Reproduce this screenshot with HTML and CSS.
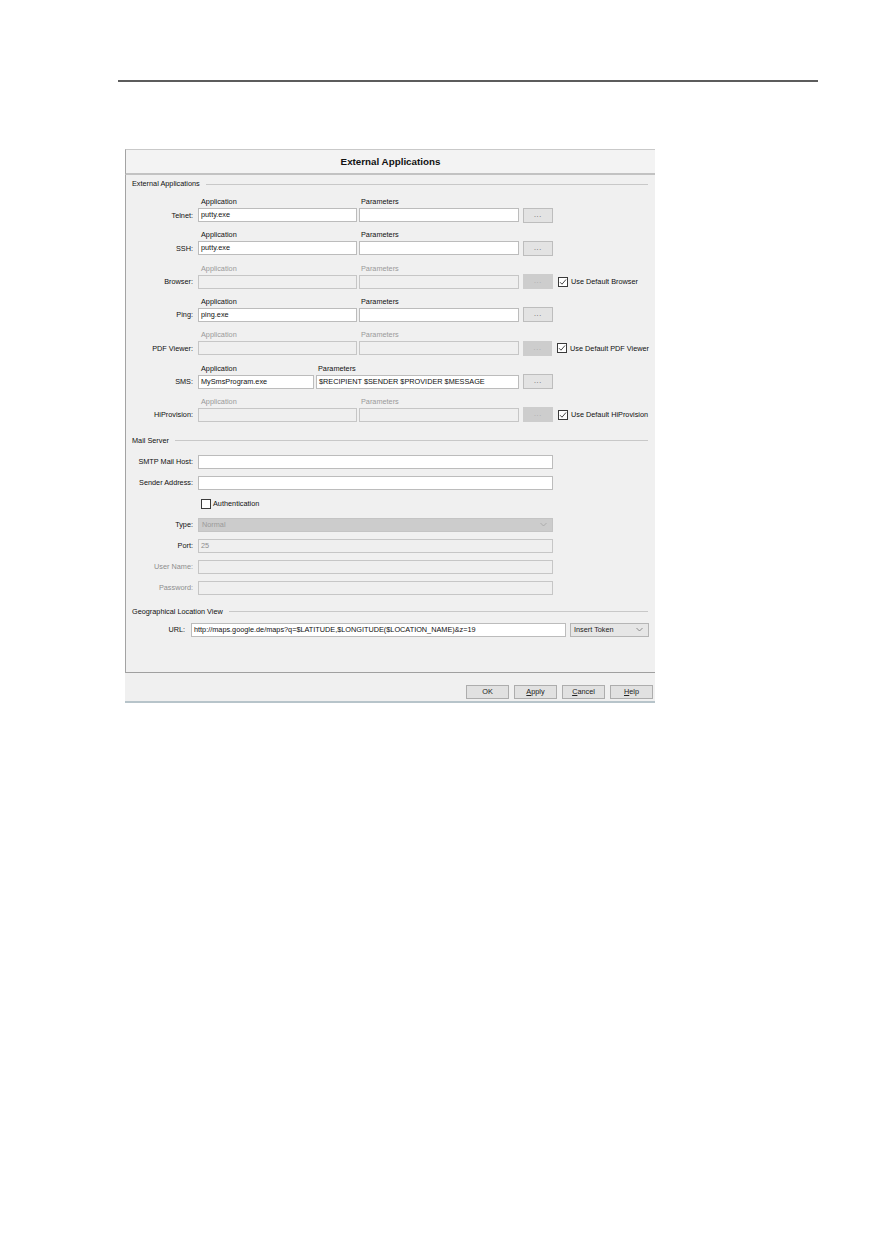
FILE: index.html
```html
<!DOCTYPE html>
<html lang="en">
<head>
    <meta charset="UTF-8">
    <meta name="viewport" content="width=device-width, initial-scale=1.0">
    <title>External Applications</title>
    <link rel="stylesheet" href="styles.css">
</head>
<body>
    <div class="page">
        <div class="rule"></div>

        <div id="dialog">
            <div class="titlebar">External Applications</div>

            <div class="content">
                <!-- external applications -->
                <div class="group-title"><span>External Applications</span></div>
                <div class="apps">
                    <div class="app">
                        <div class="heads"><span class="h-app">Application</span><span class="h-par">Parameters</span></div>
                        <div class="line">
                            <span class="lbl">Telnet:</span>
                            <div class="field f-app">putty.exe</div>
                            <div class="field f-par"></div>
                            <div class="dots">...</div>
                        </div>
                    </div>
                    <div class="app">
                        <div class="heads"><span class="h-app">Application</span><span class="h-par">Parameters</span></div>
                        <div class="line">
                            <span class="lbl">SSH:</span>
                            <div class="field f-app">putty.exe</div>
                            <div class="field f-par"></div>
                            <div class="dots">...</div>
                        </div>
                    </div>
                    <div class="app off">
                        <div class="heads"><span class="h-app">Application</span><span class="h-par">Parameters</span></div>
                        <div class="line">
                            <span class="lbl">Browser:</span>
                            <div class="field f-app"></div>
                            <div class="field f-par"></div>
                            <div class="dots">...</div>
                            <span class="check on"><i></i>Use Default Browser</span>
                        </div>
                    </div>
                    <div class="app">
                        <div class="heads"><span class="h-app">Application</span><span class="h-par">Parameters</span></div>
                        <div class="line">
                            <span class="lbl">Ping:</span>
                            <div class="field f-app">ping.exe</div>
                            <div class="field f-par"></div>
                            <div class="dots">...</div>
                        </div>
                    </div>
                    <div class="app off">
                        <div class="heads"><span class="h-app">Application</span><span class="h-par">Parameters</span></div>
                        <div class="line">
                            <span class="lbl">PDF Viewer:</span>
                            <div class="field f-app"></div>
                            <div class="field f-par"></div>
                            <div class="dots">...</div>
                            <span class="check on"><i></i>Use Default PDF Viewer</span>
                        </div>
                    </div>
                    <div class="app sms">
                        <div class="heads"><span class="h-app">Application</span><span class="h-par">Parameters</span></div>
                        <div class="line">
                            <span class="lbl">SMS:</span>
                            <div class="field f-app">MySmsProgram.exe</div>
                            <div class="field f-par">$RECIPIENT $SENDER $PROVIDER $MESSAGE</div>
                            <div class="dots">...</div>
                        </div>
                    </div>
                    <div class="app off">
                        <div class="heads"><span class="h-app">Application</span><span class="h-par">Parameters</span></div>
                        <div class="line">
                            <span class="lbl">HiProvision:</span>
                            <div class="field f-app"></div>
                            <div class="field f-par"></div>
                            <div class="dots">...</div>
                            <span class="check on"><i></i>Use Default HiProvision</span>
                        </div>
                    </div>
                </div>

                <!-- mail server -->
                <div class="group-title mail-title"><span>Mail Server</span></div>
                <div class="mail">
                    <div class="line">
                        <span class="lbl">SMTP Mail Host:</span>
                        <div class="field f-wide"></div>
                    </div>
                    <div class="line">
                        <span class="lbl">Sender Address:</span>
                        <div class="field f-wide"></div>
                    </div>
                    <div class="line">
                        <span class="lbl"></span>
                        <span class="check auth"><i></i>Authentication</span>
                    </div>
                    <div class="line">
                        <span class="lbl">Type:</span>
                        <div class="combo disabled">Normal
                            <svg width="7" height="5" viewBox="0 0 7 5"><path d="M0.5 1 L3.5 4 L6.5 1" fill="none" stroke="#a5a5a5" stroke-width="0.8"/></svg>
                        </div>
                    </div>
                    <div class="line">
                        <span class="lbl">Port:</span>
                        <div class="field f-wide disabled">25</div>
                    </div>
                    <div class="line">
                        <span class="lbl grey">User Name:</span>
                        <div class="field f-wide disabled"></div>
                    </div>
                    <div class="line">
                        <span class="lbl grey">Password:</span>
                        <div class="field f-wide disabled"></div>
                    </div>
                </div>

                <!-- geo location -->
                <div class="group-title geo-title"><span>Geographical Location View</span></div>
                <div class="line url-line">
                    <span class="lbl">URL:</span>
                    <div class="field f-url">http://maps.google.de/maps?q=$LATITUDE,$LONGITUDE($LOCATION_NAME)&amp;z=19</div>
                    <div class="combo token">Insert Token
                        <svg width="7" height="5" viewBox="0 0 7 5"><path d="M0.5 1 L3.5 4 L6.5 1" fill="none" stroke="#777" stroke-width="0.8"/></svg>
                    </div>
                </div>
            </div>

            <div class="buttonbar">
                <button>OK</button>
                <button><u>A</u>pply</button>
                <button><u>C</u>ancel</button>
                <button><u>H</u>elp</button>
            </div>
        </div>
    </div>
</body>
</html>
```

FILE: styles.css
```css
body {
    margin: 0;
    padding: 0;
    background-color: #fff;
    font-family: "Liberation Sans", Arial, sans-serif;
}
.page {
    padding-top: 80px;
}
.rule {
    margin-left: 118px;
    width: 700px;
    height: 2px;
    background-color: #5c5c5c;
}

#dialog {
    margin-top: 67px;
    margin-left: 125px;
    width: 530px;
    font-size: 7.3px;
    color: #111;
}
.titlebar {
    height: 23px;
    line-height: 24px;
    border-top: 1px solid #c9c9c9;
    border-bottom: 2px solid #c2c2c2;
    border-left: 1px solid #a3a3a3;
    background-color: #f3f3f3;
    text-align: center;
    font-size: 9.8px;
    font-weight: bold;
    color: #111;
}
.content {
    border-left: 1px solid #a3a3a3;
    border-bottom: 1px solid #a0a0a0;
    background-color: #f0f0f0;
    padding: 4px 6px 35px 6px;
}

/* group headers with the line after them */
.group-title {
    display: flex;
    align-items: center;
    height: 10px;
    line-height: 10px;
    margin-right: 1px;
}
.group-title::after {
    content: "";
    flex: 1;
    height: 1px;
    margin-left: 6px;
    background-color: #c8c8c8;
}
.mail-title {
    margin-top: 14px;
}
.geo-title {
    margin-top: 12px;
}

.apps {
    margin-top: 7px;
    display: flex;
    flex-direction: column;
    gap: 7.33px;
}
.heads {
    display: flex;
    height: 12px;
    line-height: 12px;
    padding-left: 66px;
}
.h-app {
    width: 158px;
    padding-left: 3px;
}
.h-par {
    padding-left: 2px;
}
.line {
    display: flex;
    align-items: center;
    height: 14px;
}
.lbl {
    width: 61px;
    margin-right: 5px;
    text-align: right;
    flex-shrink: 0;
}
.lbl.grey {
    color: #8e8e8e;
}

.field {
    box-sizing: border-box;
    height: 14px;
    line-height: 12px;
    padding-left: 2px;
    border: 1px solid #bcbcbc;
    background-color: #fff;
    white-space: nowrap;
    overflow: hidden;
    flex-shrink: 0;
}
.field.disabled {
    background-color: #efefef;
    border-color: #c6c6c6;
    color: #8e8e8e;
}
.f-app {
    width: 159px;
    margin-right: 2px;
}
.f-par {
    width: 160px;
    margin-right: 4px;
}
.sms .h-app {
    width: 115px;
}
.sms .f-app {
    width: 116px;
}
.sms .f-par {
    width: 203px;
}
.f-wide {
    width: 355px;
}

.dots {
    box-sizing: border-box;
    width: 30px;
    height: 15px;
    line-height: 11px;
    text-align: center;
    font-size: 7px;
    letter-spacing: 0.8px;
    background-color: #e3e3e3;
    border: 1px solid #bdbdbd;
    color: #555;
}

/* rows turned off by their "use default" box */
.app.off .heads {
    color: #9a9a9a;
}
.app.off .field {
    background-color: #efefef;
    border-color: #c6c6c6;
}
.app.off .dots {
    background-color: #cdcdcd;
    border-color: #cdcdcd;
    color: #a8a8a8;
}

.check {
    display: flex;
    align-items: center;
    margin-left: 5px;
    white-space: nowrap;
}
.check i {
    box-sizing: border-box;
    width: 10px;
    height: 10px;
    margin-right: 3px;
    border: 1px solid #3a3a3a;
    background-color: #fff;
}
.check.on i {
    background: #fff url("data:image/svg+xml;utf8,<svg xmlns='http://www.w3.org/2000/svg' width='8' height='8' viewBox='0 0 8 8'><path d='M1 4.2 L3 6.2 L7 1.5' fill='none' stroke='%23333' stroke-width='0.9'/></svg>") no-repeat center;
}
.check.auth {
    margin-left: 3px;
}
.check.auth i {
    margin-right: 2px;
}

.mail {
    margin-top: 9px;
    display: flex;
    flex-direction: column;
    gap: 7px;
}

.combo {
    box-sizing: border-box;
    display: flex;
    align-items: center;
    justify-content: space-between;
    height: 14px;
    padding: 0 5px 0 3px;
    border: 1px solid #bdbdbd;
}
.combo.disabled {
    width: 355px;
    background-color: #cccccc;
    border-color: #c4c4c4;
    color: #9a9a9a;
}
.combo.token {
    width: 82px;
    background-color: #e6e6e6;
    border-color: #b5b5b5;
    color: #222;
}

.url-line {
    margin-top: 6px;
}
.url-line .lbl {
    width: 53px;
    margin-right: 6px;
}
.f-url {
    width: 375px;
    margin-right: 4px;
}

.buttonbar {
    display: flex;
    justify-content: flex-end;
    gap: 5px;
    box-sizing: border-box;
    height: 30px;
    padding: 12px 2px 0 0;
    background-color: #f0f0f0;
    border-bottom: 2px solid #b7c4ca;
}
button {
    box-sizing: border-box;
    width: 43px;
    height: 14px;
    padding: 0;
    font-family: "Liberation Sans", Arial, sans-serif;
    font-size: 7.3px;
    color: #222;
    background-color: #e1e1e1;
    border: 1px solid #adadad;
}
```
